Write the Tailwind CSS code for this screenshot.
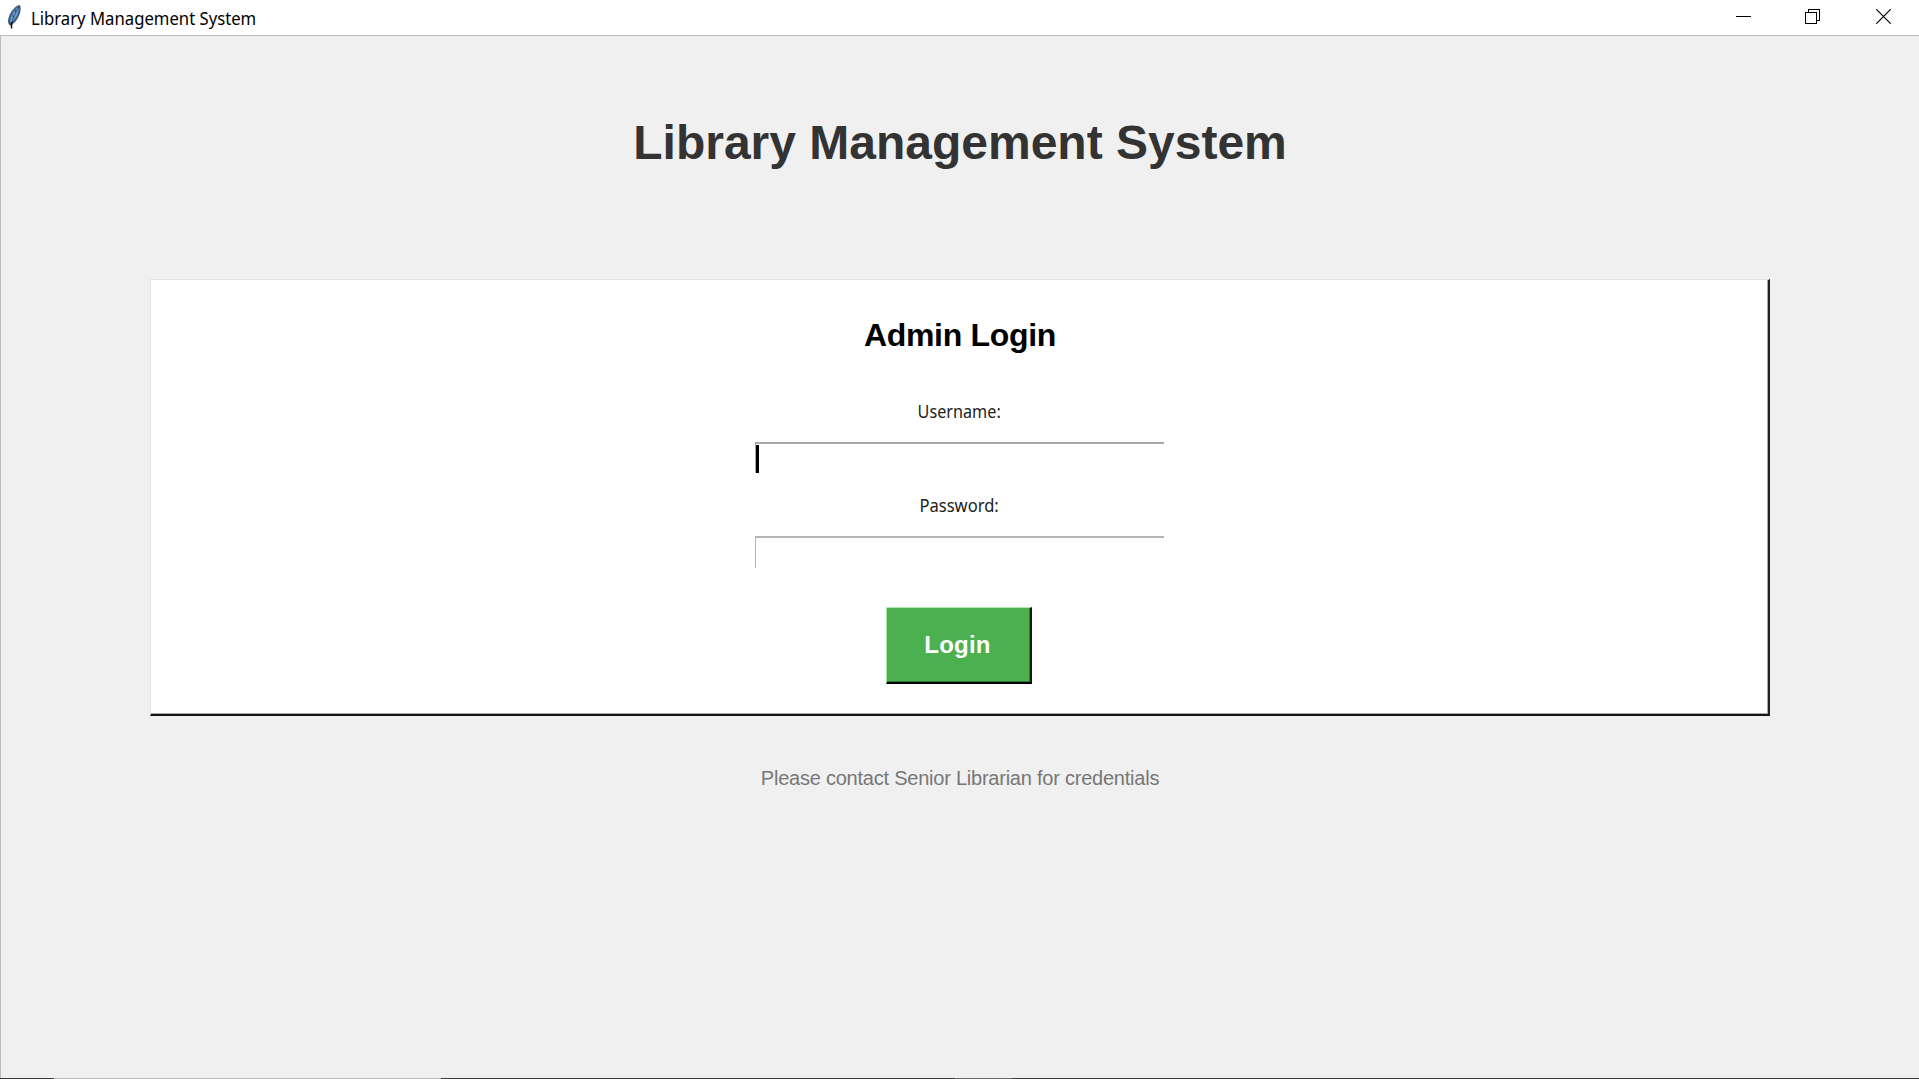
<!DOCTYPE html>
<html lang="en">
<head>
<meta charset="utf-8">
<title>Library Management System</title>
<script src="https://cdn.jsdelivr.net/npm/@tailwindcss/browser@4"></script>
</head>
<body class="h-screen overflow-hidden bg-[#f0f0f0] font-['Liberation_Sans',Arial,sans-serif]">
<div class="flex h-screen flex-col">
  <header class="flex h-[35px] shrink-0 items-start justify-between bg-white">
    <div class="flex items-start">
      <svg class="ml-1.5 mt-1 h-[26px] w-4" viewBox="0 0 16 26">
        <path d="M13.500 1C9 2 4 8 2.500 14c-.8 3-.6 5 .8 7l1.500 .8L7 20c4-3 7-9 7.600-14 .2-2.500 0-4.500-1.100-5z" fill="#3f5c80"/>
        <path d="M12.500 3C9 5 6 9 4.700 14L4 19l3-2c3-3 5-7 5.700-11z" fill="#6a9fda"/>
        <path d="M12.800 3C9.500 8 7 14 5.500 20" stroke="#2b4666" stroke-width=".9" fill="none"/>
        <path d="M9 6l.8 2M6.500 11l1 2" stroke="#1d2b3f" stroke-width=".8" fill="none"/>
        <path d="M5.500 18v6.500" stroke="#111" stroke-width="1.500"/>
      </svg>
      <span class="ml-[9px] mt-1.5 block origin-left scale-x-[0.927] whitespace-nowrap font-['Noto_Sans',sans-serif] text-[18px] leading-6 text-black">Library Management System</span>
    </div>
    <div class="mr-7 mt-[9px] flex gap-[54px]">
      <svg class="h-[15px] w-[15px]" viewBox="0 0 15 15" shape-rendering="crispEdges"><path d="M0 7.500h15" stroke="#000"/></svg>
      <svg class="h-[15px] w-[15px]" viewBox="0 0 15 15" fill="none" stroke="#000" shape-rendering="crispEdges"><path d="M.5 3.500h11v11H.5zM3.500 3.500v-3h11v11h-3"/></svg>
      <svg class="ml-0.5 h-[15px] w-[15px]" viewBox="0 0 15 15"><path d="M.3.3l14.400 14.400M14.700.3L.3 14.700" stroke="#000" stroke-width="1.200"/></svg>
    </div>
  </header>
  <main class="flex grow flex-col items-center border-l border-t border-[#bdbdbd]">
    <h1 class="mt-[79px] whitespace-nowrap text-[48px] font-bold leading-[56px] text-[#333]">Library Management System</h1>
    <section class="mt-[108px] h-[437px] w-[1620px] border-b-2 border-l border-r-2 border-t border-b-[#151515] border-l-[#e3e3e3] border-r-[#222] border-t-[#e3e3e3]">
      <div class="flex h-full flex-col items-center border-b border-r border-[#a8a8a8] bg-white">
        <h2 class="mt-[37px] pl-0.5 text-[32px] font-bold leading-9 tracking-[-0.3px] text-black">Admin Login</h2>
        <label for="user" class="mt-[46px] block scale-x-[0.9] pl-px font-['Noto_Sans',sans-serif] text-[18px] leading-6 text-[#222]">Username:</label>
        <div class="mt-[19px] flex h-[31px] w-[409px] border-l border-t-2 border-[#a9a9a9] pt-px" id="user">
          <span class="h-[28px] w-[3px] bg-black"></span>
        </div>
        <label for="pass" class="mt-5 block scale-x-[0.92] font-['Noto_Sans',sans-serif] text-[18px] leading-6 text-[#222]">Password:</label>
        <div class="mt-[19px] h-8 w-[409px] border-l border-t-2 border-[#b5b5b5]" id="pass"></div>
        <button class="mr-px mt-[39px] h-[77px] w-[146px] border-b-2 border-l border-r-2 border-t border-b-black border-l-[#a5efa8] border-r-[#0c1c0d] border-t-[#a5efa8]">
          <span class="flex h-full items-center justify-center border-b border-r border-[#2f7a32] bg-[#4caf50] text-[24px] font-bold leading-7 tracking-[0.2px] text-white">Login</span>
        </button>
      </div>
    </section>
    <p class="mt-[50px] whitespace-nowrap text-[20px] leading-6 tracking-[-0.23px] text-[#777]">Please contact Senior Librarian for credentials</p>
  </main>
  <footer class="flex h-px shrink-0 bg-[#3d3a3a]">
    <span class="ml-[54px] w-[387px] bg-[#bbb]"></span>
    <span class="ml-[514px] w-[57px] bg-[#666]"></span>
  </footer>
</div>
</body>
</html>
